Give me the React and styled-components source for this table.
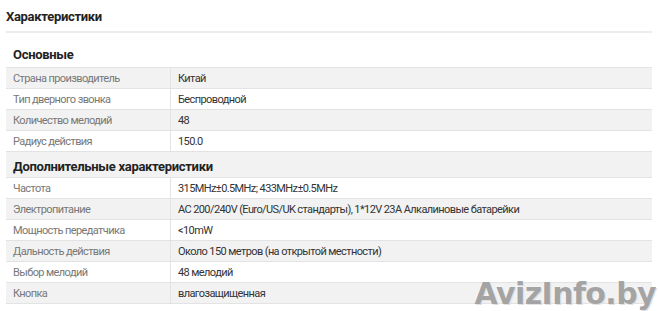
import React from 'react';
import styled, { createGlobalStyle } from 'styled-components';

const GlobalStyle = createGlobalStyle`
  html, body {
    margin: 0;
    padding: 0;
    background: #fff;
  }
  body {
    font-family: Roboto, "Noto Sans", sans-serif;
  }
`;

const Page = styled.div`
  position: relative;
  width: 659px;
  height: 311px;
  overflow: hidden;
  padding: 0 7px 0 6px;
  box-sizing: border-box;
`;

const Title = styled.h2`
  margin: 0;
  padding: 9px 0 6px 0;
  font-size: 13px;
  line-height: 16px;
  font-weight: 700;
  letter-spacing: -0.3px;
  color: #222;
  border-bottom: 2px solid #ececec;
`;

const Table = styled.div`
  display: flex;
  flex-direction: column;
  margin-top: 8px;
  border-bottom: 1px solid #e3e3e3;
`;

const GroupHead = styled.div`
  box-sizing: border-box;
  height: 26px;
  padding: ${p => (p.first ? '6px 7px 0' : '7px 7px 0')};
  font-size: 13px;
  line-height: 15px;
  font-weight: 700;
  letter-spacing: -0.3px;
  color: #222;
  background: ${p => (p.striped ? '#f2f2f2' : '#fff')};
  border-top: ${p => (p.first ? 'none' : '1px solid #e3e3e3')};
`;

const Row = styled.div`
  box-sizing: border-box;
  display: grid;
  grid-template-columns: 165px 1fr;
  height: 21px;
  border-top: 1px solid #e3e3e3;
  background: ${p => (p.striped ? '#f2f2f2' : '#fff')};
  font-size: 11px;
  line-height: 21px;
  letter-spacing: -0.6px;
`;

const Label = styled.div`
  padding-left: 7px;
  color: #777;
  border-right: 1px solid #e3e3e3;
  white-space: nowrap;
`;

const Value = styled.div`
  padding-left: 7px;
  color: #333;
  white-space: nowrap;
`;

const Watermark = styled.div`
  position: absolute;
  right: 3px;
  bottom: 0px;
  font-family: "DejaVu Sans", Verdana, sans-serif;
  font-weight: 700;
  font-size: 30px;
  letter-spacing: -0.6px;
  color: #a4a4a4;
  text-shadow: 0 0 2px #fff, 1px 1px 0 #d8d8d8;
`;

const groups = [
  {
    title: 'Основные',
    rows: [
      ['Страна производитель', 'Китай'],
      ['Тип дверного звонка', 'Беспроводной'],
      ['Количество мелодий', '48'],
      ['Радиус действия', '150.0'],
    ],
  },
  {
    title: 'Дополнительные характеристики',
    rows: [
      ['Частота', '315MHz±0.5MHz; 433MHz±0.5MHz'],
      ['Электропитание', 'AC 200/240V (Euro/US/UK стандарты), 1*12V 23A Алкалиновые батарейки'],
      ['Мощность передатчика', '<10mW'],
      ['Дальность действия', 'Около 150 метров (на открытой местности)'],
      ['Выбор мелодий', '48 мелодий'],
      ['Кнопка', 'влагозащищенная'],
    ],
  },
];

export default function App() {
  let index = 0;
  return (
    <Page>
      <GlobalStyle />
      <Title>Характеристики</Title>
      <Table>
        {groups.map((g, gi) => {
          index++;
          const head = (
            <GroupHead key={'h' + gi} first={gi === 0} striped={index % 2 === 0}>
              {g.title}
            </GroupHead>
          );
          const rows = g.rows.map((r, ri) => {
            index++;
            return (
              <Row key={gi + '-' + ri} striped={index % 2 === 0}>
                <Label>{r[0]}</Label>
                <Value>{r[1]}</Value>
              </Row>
            );
          });
          return [head, ...rows];
        })}
      </Table>
      <Watermark>AvizInfo.by</Watermark>
    </Page>
  );
}
